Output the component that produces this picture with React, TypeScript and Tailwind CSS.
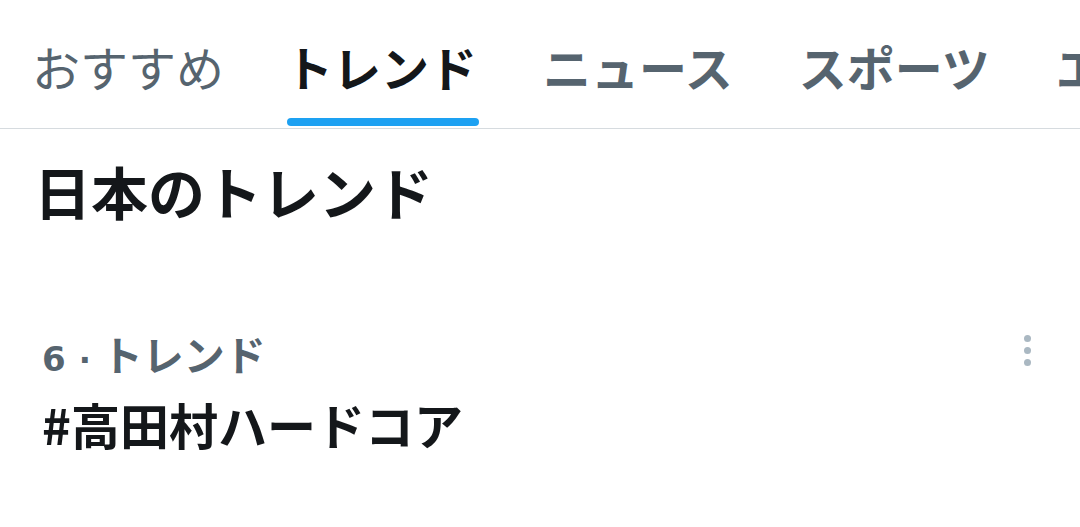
import React from "react";

const tabs = [
  { label: "おすすめ", active: false, weight: "font-normal" },
  { label: "トレンド", active: true, weight: "font-bold" },
  { label: "ニュース", active: false, weight: "font-bold" },
  { label: "スポーツ", active: false, weight: "font-bold" },
  { label: "エンタメ", active: false, weight: "font-bold" },
];

export default function App() {
  return (
    <div
      className="w-[1080px] h-[527px] bg-white overflow-hidden"
      style={{ fontFamily: '"Noto Sans CJK JP", "Noto Sans", sans-serif' }}
    >
      <div className="h-[129px] border-b border-[#d6dbdf] flex gap-[66px] pl-[32px] overflow-hidden">
        {tabs.map((t, i) => (
          <div
            key={t.label}
            className={`flex flex-col items-stretch pt-[42px] shrink-0 ${
              i === 0 ? "-mr-[5px]" : ""
            }`}
          >
            <div
              className={`text-[48px] leading-none h-[48px] whitespace-nowrap ${t.weight} ${
                t.active ? "text-[#14171a]" : "text-[#56646f]"
              }`}
            >
              {t.label}
            </div>
            {t.active && (
              <div className="mt-[28px] h-2 rounded-full bg-[#1da1f2] ml-[2px] -mr-[2px]" />
            )}
          </div>
        ))}
      </div>

      <h1 className="mt-[33px] ml-[34px] text-[57px] leading-none font-bold text-[#14171a]">
        日本のトレンド
      </h1>

      <div className="mt-[114px] flex justify-between pl-[42px] pr-[49px]">
        <div>
          <div className="flex items-baseline leading-none font-bold text-[#56646f] h-[40px]">
            <span
              className="text-[34px]"
              style={{ fontFamily: '"DejaVu Sans", sans-serif' }}
            >
              6
            </span>
            <span
              className="text-[32px] ml-[13px] mr-[11px]"
              style={{ fontFamily: '"DejaVu Sans", sans-serif' }}
            >
              ·
            </span>
            <span className="text-[41px]">トレンド</span>
          </div>
          <div className="mt-[26px] text-[49px] leading-none font-bold text-[#14171a]">
            #高田村ハードコア
          </div>
        </div>
        <div className="flex flex-col gap-[5px] pt-[2px]">
          <span className="w-[7px] h-[7px] rounded-full bg-[#aab8c2]" />
          <span className="w-[7px] h-[7px] rounded-full bg-[#aab8c2]" />
          <span className="w-[7px] h-[7px] rounded-full bg-[#aab8c2]" />
        </div>
      </div>
    </div>
  );
}
